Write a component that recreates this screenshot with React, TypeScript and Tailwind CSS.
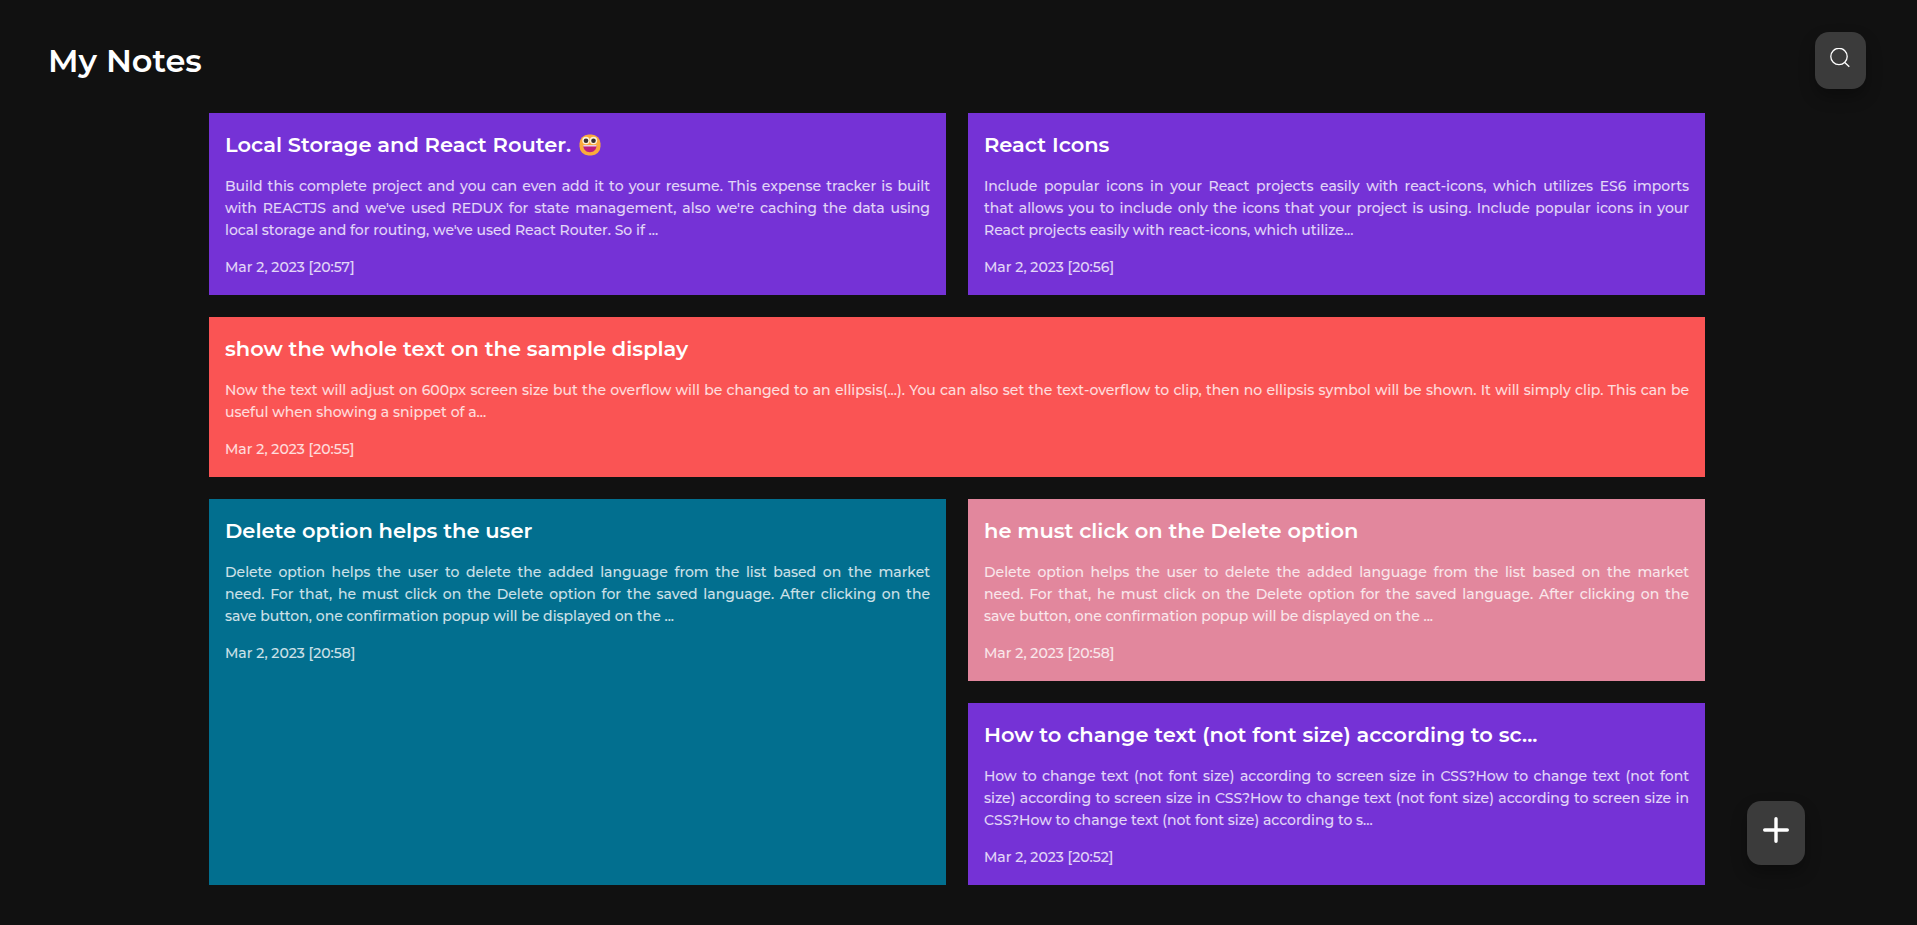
type Note = { title: string; body: string; date: string; tone: string; face?: boolean };

const deleteBody =
  'Delete option helps the user to delete the added language from the list based on the market need.\u00a0For that, he must click on the Delete option for the saved language. After clicking on the save button, one confirmation popup will be displayed on the ...';

const notes: Note[] = [
  {
    title: 'Local Storage and React Router.',
    body: "Build this complete project and you can even add it to your resume. This expense tracker is built with REACTJS and we've used REDUX for state management, also we're caching the data using local storage and for routing, we've used React Router. So if ...",
    date: 'Mar 2, 2023 [20:57]',
    tone: 'bg-[#7532d6]',
    face: true,
  },
  {
    title: 'React Icons',
    body: 'Include popular icons in your React projects easily with react-icons, which utilizes ES6 imports that\u00a0allows you to include only the icons that your project is using. Include popular icons in your React projects easily with react-icons, which utilize...',
    date: 'Mar 2, 2023 [20:56]',
    tone: 'bg-[#7532d6]',
  },
  {
    title: 'show the whole text on the sample display',
    body: 'Now the text will adjust on 600px screen size but the overflow will be changed to an ellipsis(...). You can also set the text-overflow to clip, then no ellipsis symbol will be shown. It will simply clip. This can be useful when showing a snippet of a...',
    date: 'Mar 2, 2023 [20:55]',
    tone: 'bg-[#fa5454] col-span-2',
  },
  {
    title: 'Delete option helps the user',
    body: deleteBody,
    date: 'Mar 2, 2023 [20:58]',
    tone: 'bg-[#026f8f] row-span-2',
  },
  {
    title: 'he must click on the Delete option',
    body: deleteBody,
    date: 'Mar 2, 2023 [20:58]',
    tone: 'bg-[#e2879d]',
  },
  {
    title: 'How to change text (not font size) according to sc...',
    body: 'How to change text (not font size) according to screen size in CSS?How to change text (not font size) according to screen size in CSS?How to change text (not font size) according to screen size in CSS?How to change text (not font size) according to s...',
    date: 'Mar 2, 2023 [20:52]',
    tone: 'bg-[#7532d6]',
  },
];

function Face() {
  return (
    <svg className="size-[22px]" viewBox="0 0 22 22" aria-hidden="true">
      <rect x="0.5" y="0.5" width="21" height="21" rx="9" fill="#fbab3c" />
      <circle cx="7" cy="6.5" r="3.7" fill="#fff3d6" />
      <circle cx="14.5" cy="6.5" r="3.7" fill="#fff3d6" />
      <circle cx="7" cy="6.7" r="2.3" fill="#3b2f2f" />
      <circle cx="14.5" cy="6.7" r="2.3" fill="#3b2f2f" />
      <path d="M4.3 11.5h13.2c0 4-2.8 6.7-6.6 6.7s-6.6-2.7-6.6-6.7z" fill="#bb1d80" />
      <path d="M4.3 11h13.2v1.5H4.3z" fill="#e8d3e0" />
    </svg>
  );
}

function NoteCard({ note }: { note: Note }) {
  return (
    <article className={`flex flex-col gap-[15px] px-4 py-[17px] ${note.tone}`}>
      <h2 className="flex items-center gap-2 text-[21px] leading-[30px] font-semibold text-white">
        {note.title}
        {note.face && <Face />}
      </h2>
      <p className="text-justify text-sm leading-[22px] font-medium text-white/80">{note.body}</p>
      <time className="text-sm leading-[22px] font-medium text-white/80">{note.date}</time>
    </article>
  );
}

export default function App() {
  return (
    <div className="min-h-screen bg-[#111111] pb-10 font-['Montserrat','Inter',sans-serif]">
      <header className="flex items-start justify-between pt-8 pr-[51px] pb-6 pl-12">
        <h1 className="text-[32px] leading-[57px] font-semibold text-white">My Notes</h1>
        <button
          type="button"
          aria-label="Search notes"
          className="flex h-[57px] w-[51px] justify-center rounded-[14px] bg-[#3b3b3b] pt-4 shadow-[0_8px_16px_rgba(0,0,0,0.3)]"
        >
          <svg className="size-[21px]" viewBox="0 0 21 21" fill="none" stroke="#ffffff" strokeWidth="1.3">
            <circle cx="9" cy="8.5" r="8.2" />
            <path d="M14.5 14.2L19.3 18.8" />
          </svg>
        </button>
      </header>
      <main className="grid grid-cols-2 gap-[22px] pr-[212px] pl-[209px]">
        {notes.map((note) => (
          <NoteCard key={note.title} note={note} />
        ))}
      </main>
      <button
        type="button"
        aria-label="Add note"
        className="fixed right-28 bottom-[60px] flex h-16 w-[58px] justify-center rounded-[14px] bg-[#3b3b3b] pt-4 shadow-[0_8px_16px_rgba(0,0,0,0.3)]"
      >
        <svg className="size-[26px]" viewBox="0 0 26 26" stroke="#ffffff" strokeWidth="3.4" strokeLinecap="round">
          <path d="M13 1.7v22.6M1.7 13h22.6" />
        </svg>
      </button>
    </div>
  );
}
